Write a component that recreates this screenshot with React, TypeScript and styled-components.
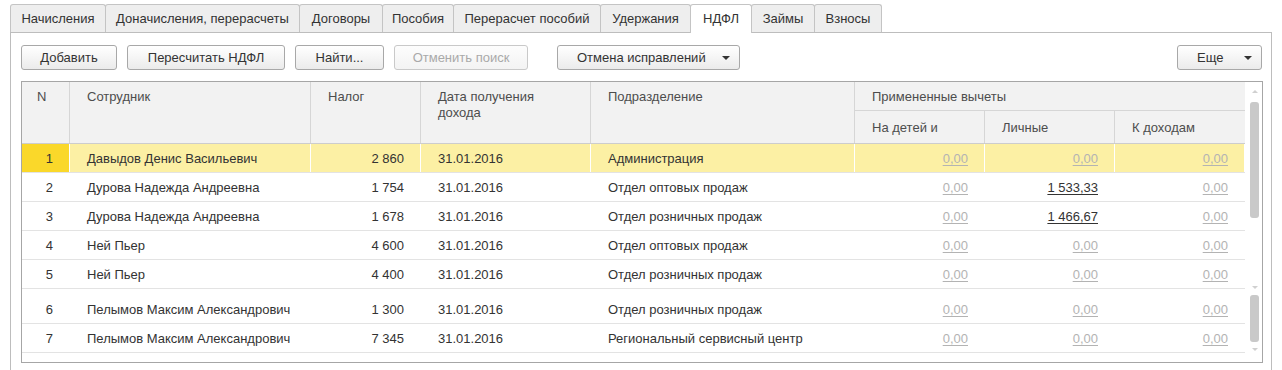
import React from "react";
import styled, { createGlobalStyle } from "styled-components";

const Global = createGlobalStyle`
  html, body { margin: 0; padding: 0; background: #fff; overflow: hidden; }
  body {
    font-family: "Liberation Sans", Arial, sans-serif;
    font-size: 13px;
    color: #333;
  }
  * { box-sizing: border-box; }
`;

const COLS = "48px 241px 110px 170px 264px 130px 130px 130px";

const Page = styled.div`
  padding: 4px 0 0 10px;
  width: 1272px;
`;

const TabBar = styled.div`
  display: flex;
  align-items: flex-start;
  height: 28px;
`;

const Tab = styled.div<{ $active?: boolean; $w: number }>`
  position: relative;
  z-index: ${(p) => (p.$active ? 2 : 1)};
  width: ${(p) => p.$w}px;
  height: ${(p) => (p.$active ? "29px" : "28px")};
  padding-bottom: ${(p) => (p.$active ? "1px" : "0")};
  display: flex;
  align-items: center;
  justify-content: center;
  border: 1px solid #c4c4c4;
  border-bottom: none;
  border-radius: 3px 3px 0 0;
  margin-right: -1px;
  background: ${(p) => (p.$active ? "#fff" : "#eeeeee")};
  color: #333;
  white-space: nowrap;
`;

const Panel = styled.div`
  border: 1px solid #bdbdbd;
  border-bottom: none;
  padding: 12px 9px 30px 10px;
`;

const Toolbar = styled.div`
  display: flex;
  align-items: center;
  gap: 10px;
  height: 25px;
`;

const Button = styled.button<{ $w: number; $gap?: number; $right?: boolean; $disabled?: boolean }>`
  width: ${(p) => p.$w}px;
  height: 25px;
  margin-left: ${(p) => (p.$right ? "auto" : p.$gap ? `${p.$gap}px` : "0")};
  border: 1px solid ${(p) => (p.$disabled ? "#c9c9c9" : "#a8a8a8")};
  border-radius: 3px;
  background: ${(p) =>
    p.$disabled ? "linear-gradient(#fdfdfd, #f3f3f3)" : "linear-gradient(#ffffff, #ebebeb)"};
  font-family: "Liberation Sans", Arial, sans-serif;
  font-size: 13px;
  color: ${(p) => (p.$disabled ? "#a9a9a9" : "#333")};
  display: flex;
  align-items: center;
  justify-content: center;
  padding: 0;
  cursor: default;
`;

const DropButton = styled(Button)`
  justify-content: space-between;
  padding: 0 9px 0 19px;
`;

const Caret = styled.span`
  width: 0;
  height: 0;
  border-left: 4px solid transparent;
  border-right: 4px solid transparent;
  border-top: 4px solid #333;
`;

const Table = styled.div`
  margin-top: 11px;
  width: 1242px;
  height: 282px;
  border: 1px solid #a6a6a6;
  display: flex;
`;

const GridArea = styled.div`
  flex: 1;
  display: flex;
  flex-direction: column;
`;

const Header = styled.div`
  display: grid;
  grid-template-columns: ${COLS};
  grid-template-rows: 29px 32px;
  background: #f2f2f2;
  border-bottom: 1px solid #cdcdcd;
  height: 62px;
  color: #4d4d4d;
`;

const HeadCell = styled.div<{ $pl?: number; $span?: boolean }>`
  grid-row: ${(p) => (p.$span ? "1 / 3" : "auto")};
  padding: 7px 8px 0 ${(p) => p.$pl ?? 17}px;
  line-height: 16px;
  border-right: 1px solid #d6d6d6;
`;

const GroupHead = styled.div`
  grid-column: 6 / 9;
  grid-row: 1;
  display: flex;
  align-items: center;
  padding-left: 17px;
  border-bottom: 1px solid #d6d6d6;
`;

const SubHead = styled.div<{ $last?: boolean }>`
  grid-row: 2;
  display: flex;
  align-items: center;
  padding-left: 17px;
  border-right: ${(p) => (p.$last ? "none" : "1px solid #d6d6d6")};
`;

const Row = styled.div<{ $selected?: boolean; $tall?: boolean }>`
  display: grid;
  grid-template-columns: ${COLS};
  height: ${(p) => (p.$tall ? "35px" : "29px")};
  padding-top: ${(p) => (p.$tall ? "6px" : "0")};
  border-bottom: 1px solid #e3e3e3;
  background: ${(p) => (p.$selected ? "#fcf0a4" : "#fff")};
`;

const Cell = styled.div<{ $align?: "left" | "right"; $mark?: boolean }>`
  display: flex;
  align-items: center;
  justify-content: ${(p) => (p.$align === "right" ? "flex-end" : "flex-start")};
  padding: ${(p) => (p.$align === "right" ? "0 16px 0 0" : "0 0 0 17px")};
  border-right: 1px solid #fff;
  background: ${(p) => (p.$mark ? "#fad82a" : "transparent")};
  white-space: nowrap;
  color: #333;
`;

const Amount = styled.span<{ $zero?: boolean }>`
  text-decoration: underline;
  text-underline-offset: 2px;
  color: ${(p) => (p.$zero ? "#b3b3b3" : "#333")};
`;

const Scrollbar = styled.div`
  width: 17px;
  padding-left: 5px;
  display: flex;
  flex-direction: column;
`;

const Arrow = styled.div<{ $up?: boolean; $mt: number }>`
  width: 9px;
  height: 3px;
  margin-top: ${(p) => p.$mt}px;
  display: flex;
  justify-content: center;
  &::after {
    content: "";
    width: 0;
    height: 0;
    border-left: 3px solid transparent;
    border-right: 3px solid transparent;
    ${(p) => (p.$up ? "border-bottom: 3px solid #d0d0d0;" : "border-top: 3px solid #d0d0d0;")}
  }
`;

const Thumb = styled.div<{ $mt: number; $h: number }>`
  width: 9px;
  height: ${(p) => p.$h}px;
  margin-top: ${(p) => p.$mt}px;
  background: #c9c9c9;
  border-radius: 3px;
`;

type Rec = {
  n: number;
  name: string;
  tax: string;
  date: string;
  dept: string;
  kids: string;
  personal: string;
  income: string;
};

const rows: Rec[] = [
  { n: 1, name: "Давыдов Денис Васильевич", tax: "2 860", date: "31.01.2016", dept: "Администрация", kids: "0,00", personal: "0,00", income: "0,00" },
  { n: 2, name: "Дурова Надежда Андреевна", tax: "1 754", date: "31.01.2016", dept: "Отдел оптовых продаж", kids: "0,00", personal: "1 533,33", income: "0,00" },
  { n: 3, name: "Дурова Надежда Андреевна", tax: "1 678", date: "31.01.2016", dept: "Отдел розничных продаж", kids: "0,00", personal: "1 466,67", income: "0,00" },
  { n: 4, name: "Ней Пьер", tax: "4 600", date: "31.01.2016", dept: "Отдел оптовых продаж", kids: "0,00", personal: "0,00", income: "0,00" },
  { n: 5, name: "Ней Пьер", tax: "4 400", date: "31.01.2016", dept: "Отдел розничных продаж", kids: "0,00", personal: "0,00", income: "0,00" },
  { n: 6, name: "Пелымов Максим Александрович", tax: "1 300", date: "31.01.2016", dept: "Отдел розничных продаж", kids: "0,00", personal: "0,00", income: "0,00" },
  { n: 7, name: "Пелымов Максим Александрович", tax: "7 345", date: "31.01.2016", dept: "Региональный сервисный центр", kids: "0,00", personal: "0,00", income: "0,00" },
];

const tabs: { label: string; w: number }[] = [
  { label: "Начисления", w: 96 },
  { label: "Доначисления, перерасчеты", w: 195 },
  { label: "Договоры", w: 84 },
  { label: "Пособия", w: 72 },
  { label: "Перерасчет пособий", w: 148 },
  { label: "Удержания", w: 91 },
  { label: "НДФЛ", w: 62 },
  { label: "Займы", w: 64 },
  { label: "Взносы", w: 68 },
];

export default function App() {
  return (
    <>
      <Global />
      <Page>
        <TabBar>
          {tabs.map((t) => (
            <Tab key={t.label} $w={t.w} $active={t.label === "НДФЛ"}>
              {t.label}
            </Tab>
          ))}
        </TabBar>
        <Panel>
          <Toolbar>
            <Button $w={96}>Добавить</Button>
            <Button $w={158}>Пересчитать НДФЛ</Button>
            <Button $w={89}>Найти...</Button>
            <Button $w={134} $disabled>
              Отменить поиск
            </Button>
            <DropButton $w={183} $gap={19}>
              <span>Отмена исправлений</span>
              <Caret />
            </DropButton>
            <DropButton $w={85} $right>
              <span>Еще</span>
              <Caret />
            </DropButton>
          </Toolbar>
          <Table>
            <GridArea>
              <Header>
                <HeadCell $span $pl={15}>N</HeadCell>
                <HeadCell $span>Сотрудник</HeadCell>
                <HeadCell $span>Налог</HeadCell>
                <HeadCell $span>
                  Дата получения
                  <br />
                  дохода
                </HeadCell>
                <HeadCell $span>Подразделение</HeadCell>
                <GroupHead>Примененные вычеты</GroupHead>
                <SubHead>На детей и</SubHead>
                <SubHead>Личные</SubHead>
                <SubHead $last>К доходам</SubHead>
              </Header>
              {rows.map((r) => (
                <Row key={r.n} $selected={r.n === 1} $tall={r.n === 6}>
                  <Cell $align="right" $mark={r.n === 1}>{r.n}</Cell>
                  <Cell>{r.name}</Cell>
                  <Cell $align="right">{r.tax}</Cell>
                  <Cell>{r.date}</Cell>
                  <Cell>{r.dept}</Cell>
                  <Cell $align="right">
                    <Amount $zero={r.kids === "0,00"}>{r.kids}</Amount>
                  </Cell>
                  <Cell $align="right">
                    <Amount $zero={r.personal === "0,00"}>{r.personal}</Amount>
                  </Cell>
                  <Cell $align="right">
                    <Amount $zero={r.income === "0,00"}>{r.income}</Amount>
                  </Cell>
                </Row>
              ))}
            </GridArea>
            <Scrollbar>
              <Arrow $up $mt={8} />
              <Thumb $mt={9} $h={116} />
              <Arrow $mt={68} />
              <Thumb $mt={6} $h={47} />
              <Arrow $mt={6} />
            </Scrollbar>
          </Table>
        </Panel>
      </Page>
    </>
  );
}
